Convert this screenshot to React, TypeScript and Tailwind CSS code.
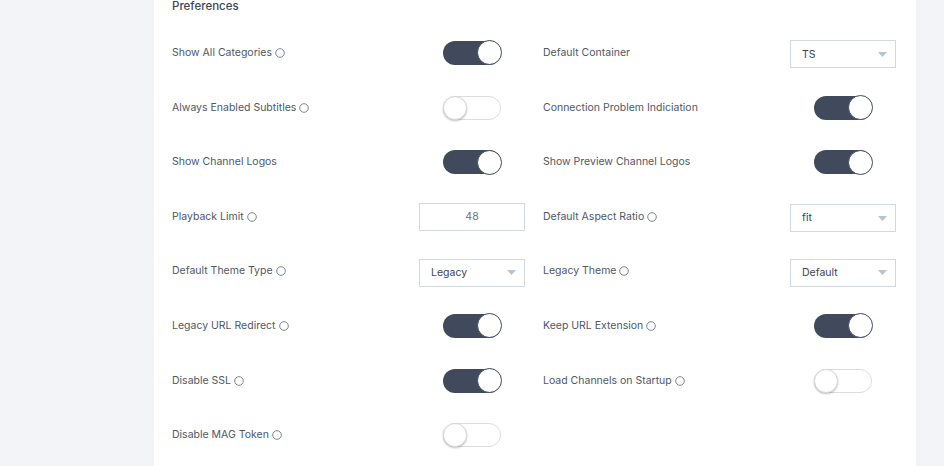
import React from "react";

type Ctl =
  | { kind: "toggle"; on: boolean }
  | { kind: "select"; value: string }
  | { kind: "input"; value: string }
  | null;

type Item = { label: string; info: boolean; ctl: Ctl };

const left: Item[] = [
  { label: "Show All Categories", info: true, ctl: { kind: "toggle", on: true } },
  { label: "Always Enabled Subtitles", info: true, ctl: { kind: "toggle", on: false } },
  { label: "Show Channel Logos", info: false, ctl: { kind: "toggle", on: true } },
  { label: "Playback Limit", info: true, ctl: { kind: "input", value: "48" } },
  { label: "Default Theme Type", info: true, ctl: { kind: "select", value: "Legacy" } },
  { label: "Legacy URL Redirect", info: true, ctl: { kind: "toggle", on: true } },
  { label: "Disable SSL", info: true, ctl: { kind: "toggle", on: true } },
  { label: "Disable MAG Token", info: true, ctl: { kind: "toggle", on: false } },
];

const right: Item[] = [
  { label: "Default Container", info: false, ctl: { kind: "select", value: "TS" } },
  { label: "Connection Problem Indiciation", info: false, ctl: { kind: "toggle", on: true } },
  { label: "Show Preview Channel Logos", info: false, ctl: { kind: "toggle", on: true } },
  { label: "Default Aspect Ratio", info: true, ctl: { kind: "select", value: "fit" } },
  { label: "Legacy Theme", info: true, ctl: { kind: "select", value: "Default" } },
  { label: "Keep URL Extension", info: true, ctl: { kind: "toggle", on: true } },
  { label: "Load Channels on Startup", info: true, ctl: { kind: "toggle", on: false } },
];

function Info() {
  return (
    <svg width="10" height="10" viewBox="0 0 10 10" className="ml-[3px] shrink-0">
      <circle cx="5" cy="5" r="4.3" fill="none" stroke="#7d8594" strokeWidth="1" />
    </svg>
  );
}

function Toggle({ on }: { on: boolean }) {
  if (on) {
    return (
      <div className="relative w-[58px] h-[24px] rounded-full bg-[#414a5c]">
        <div className="absolute right-[-1px] top-[-0.5px] w-[25px] h-[25px] rounded-full bg-white border border-[#414a5c]" />
      </div>
    );
  }
  return (
    <div className="relative w-[58px] h-[24px] rounded-full bg-white border border-[#dddddd]">
      <div className="absolute left-[-1px] top-[-1px] w-[24px] h-[24px] rounded-full bg-white border border-[#d8d8d8] shadow-[0_1px_2px_rgba(0,0,0,0.25)]" />
    </div>
  );
}

function Select({ value }: { value: string }) {
  return (
    <div className="w-[106px] h-[28px] border border-[#d3d7de] bg-white flex items-center justify-between pl-[11px] pr-[8px] mt-[3px]">
      <span className="text-[10.5px] text-[#3d4350]">{value}</span>
      <svg width="9" height="5" viewBox="0 0 9 5">
        <polygon points="0,0 9,0 4.5,5" fill="#b7c3cf" />
      </svg>
    </div>
  );
}

function Input({ value }: { value: string }) {
  return (
    <div className="w-[106px] h-[28px] border border-[#d3d7de] bg-white flex items-center justify-center">
      <span className="text-[10.5px] text-[#6b7280]">{value}</span>
    </div>
  );
}

function Row({ item }: { item: Item }) {
  return (
    <div className="h-[54.6px] flex items-center justify-between">
      <div className="flex items-center">
        <span className="text-[10.5px] text-[#4f5764] whitespace-nowrap">{item.label}</span>
        {item.info && <Info />}
      </div>
      <div className="w-[106px] flex justify-center">
        {item.ctl?.kind === "toggle" && <Toggle on={item.ctl.on} />}
        {item.ctl?.kind === "select" && <Select value={item.ctl.value} />}
        {item.ctl?.kind === "input" && <Input value={item.ctl.value} />}
      </div>
    </div>
  );
}

export default function App() {
  return (
    <div
      className="w-[944px] h-[466px] overflow-hidden bg-[#f3f4f7]"
      style={{ fontFamily: "Inter, 'Noto Sans', sans-serif" }}
    >
      <div className="ml-[154px] w-[762px] h-[466px] bg-white pl-[18px] pr-[20px]">
        <div className="text-[11.5px] leading-[12px] font-medium text-[#3e4655]">Preferences</div>
        <div className="mt-[13.7px] grid grid-cols-[353px_353px] gap-x-[18px]">
          <div className="flex flex-col">
            {left.map((it) => (
              <Row key={it.label} item={it} />
            ))}
          </div>
          <div className="flex flex-col">
            {right.map((it) => (
              <Row key={it.label} item={it} />
            ))}
          </div>
        </div>
      </div>
    </div>
  );
}
